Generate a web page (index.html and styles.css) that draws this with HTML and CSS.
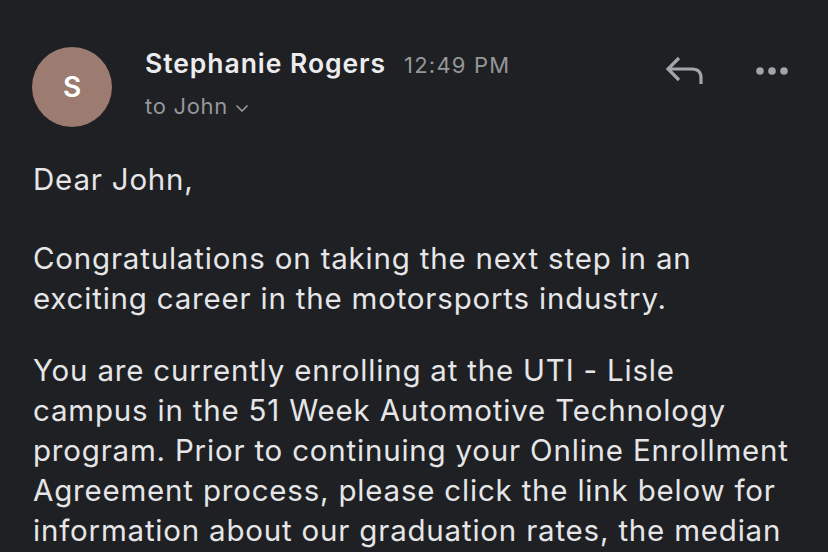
FILE: index.html
```html
<!DOCTYPE html>
<html lang="en">
<head>
    <meta charset="UTF-8">
    <meta name="viewport" content="width=device-width, initial-scale=1.0">
    <title>Message</title>
    <link rel="stylesheet" href="styles.css">
</head>
<body>
    <div class="message">
        <div class="header">
            <div class="avatar">S</div>
            <div class="meta">
                <div class="from">
                    <span class="sender">Stephanie Rogers</span>
                    <span class="time">12:49 PM</span>
                </div>
                <div class="to">to John
                    <svg class="chevron" width="14" height="9" viewBox="0 0 14 9"><path d="M2 2 L7 7 L12 2" fill="none" stroke="currentColor" stroke-width="1.7" stroke-linecap="round" stroke-linejoin="round"/></svg>
                </div>
            </div>
            <div class="actions">
                <svg class="reply" width="44" height="36" viewBox="0 0 44 36"><path d="M17 6 L6 17 L17 28 M6 17 H30 Q39 17 39 26 V32" fill="none" stroke="currentColor" stroke-width="3.2" stroke-linecap="butt" stroke-linejoin="miter"/></svg>
                <svg class="more" width="32" height="10" viewBox="0 0 32 10"><circle cx="4" cy="5" r="3.8" fill="currentColor"/><circle cx="16" cy="5" r="3.8" fill="currentColor"/><circle cx="28" cy="5" r="3.8" fill="currentColor"/></svg>
            </div>
        </div>

        <div class="body">
            <p class="greeting">Dear John,</p>
            <p>Congratulations on taking the next step in an<br>exciting career in the motorsports industry.</p>
            <p>You are currently enrolling at the UTI - Lisle<br>campus in the 51 Week Automotive Technology<br>program. Prior to continuing your Online Enrollment<br>Agreement process, please click the link below for<br>information about our graduation rates, the median</p>
        </div>
    </div>
</body>
</html>
```

FILE: styles.css
```css
html, body {
    margin: 0;
    padding: 0;
    background-color: #1f2023;
    height: 100%;
    overflow: hidden;
}
body {
    font-family: Inter, "Noto Sans", sans-serif;
    color: #e4e4e6;
}
.message {
    padding: 0 40px 0 33px;
}
.header {
    display: flex;
    align-items: flex-start;
    padding-top: 47px;
}
.avatar {
    width: 80px;
    height: 80px;
    margin-left: -1px;
    border-radius: 50%;
    background-color: #9c7b70;
    color: #fff;
    font-size: 28px;
    font-weight: 600;
    display: flex;
    align-items: center;
    justify-content: center;
    flex-shrink: 0;
}
.meta {
    margin-left: 33px;
    flex: 1;
}
.from {
    display: flex;
    align-items: baseline;
    gap: 18px;
    height: 30px;
}
.sender {
    font-size: 26.5px;
    font-weight: 600;
    letter-spacing: 0.95px;
    color: #ececee;
}
.time {
    font-size: 22px;
    letter-spacing: 1.2px;
    color: #96979b;
}
.to {
    margin-top: 16px;
    font-size: 22px;
    letter-spacing: 0.7px;
    color: #96979b;
    display: flex;
    align-items: center;
    gap: 7px;
}
.chevron {
    margin-top: 4px;
}
.actions {
    display: flex;
    align-items: flex-start;
    gap: 50px;
    padding-top: 5px;
    color: #a3a5aa;
}
.more {
    margin-top: 14px;
}
.body {
    margin-top: 32px;
    font-size: 29.5px;
    letter-spacing: 0.8px;
    line-height: 40px;
    color: #e6e6e8;
    white-space: nowrap;
}
.body p {
    margin: 0 0 32px;
}
.body .greeting {
    margin-bottom: 39px;
}
```
